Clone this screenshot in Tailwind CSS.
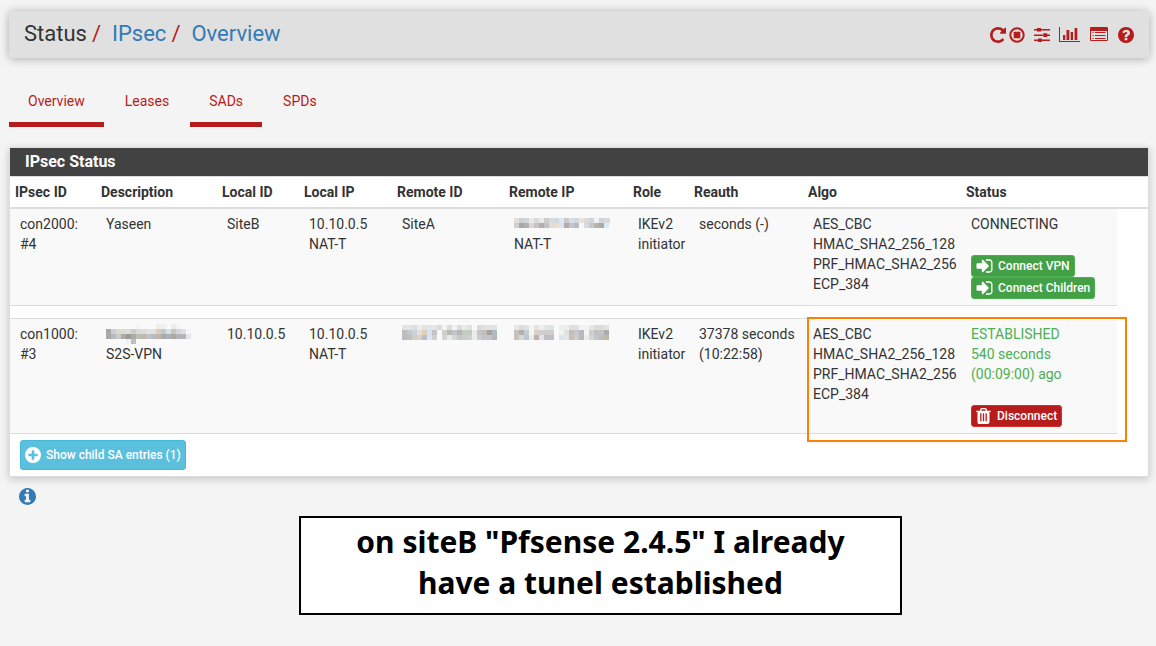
<!DOCTYPE html>
<html lang="en">
<head>
<meta charset="utf-8">
<meta name="viewport" content="width=device-width, initial-scale=1">
<title>Status / IPsec / Overview</title>
<script src="https://cdn.jsdelivr.net/npm/@tailwindcss/browser@4"></script>
</head>
<body class="min-h-screen bg-[#f4f4f4] font-['Roboto',sans-serif] text-sm text-[#333333]">
<svg class="hidden" aria-hidden="true">
  <symbol id="repeat" viewBox="128 128 1536 1536"><path d="M1664 256v448q0 26-19 45t-45 19h-448q-42 0-59-40-17-39 14-69l138-138q-148-137-349-137-104 0-198.5 40.5t-163.5 109.5-109.5 163.5-40.5 198.5 40.5 198.5 109.5 163.5 163.5 109.5 198.5 40.5q119 0 225-52t179-147q7-10 23-12 15 0 25 9l137 138q9 8 9.5 20.5t-7.5 22.5q-109 132-264 204.5t-327 72.5q-156 0-298-61t-245-164-164-245-61-298 61-298 164-245 245-164 298-61q147 0 284.5 55.5t244.5 156.5l130-129q29-31 70-14 39 17 39 59z"/></symbol>
  <symbol id="question" viewBox="128 128 1536 1536"><path d="M1024 1376v-192q0-14-9-23t-23-9h-192q-14 0-23 9t-9 23v192q0 14 9 23t23 9h192q14 0 23-9t9-23zm256-672q0-88-55.5-163t-138.5-116-170-41q-243 0-371 213-15 24 8 42l132 100q7 6 19 6 16 0 25-12 53-68 86-92 34-24 86-24 48 0 85.5 26t37.5 59q0 38-20 61t-68 45q-63 28-115.5 86.5t-52.5 125.5v36q0 14 9 23t23 9h192q14 0 23-9t9-23q0-19 21.5-49.5t54.5-49.5q32-18 49-28.5t46-35 44.5-48 28-60.5 12.5-81zm384 192q0 209-103 385.5t-279.5 279.5-385.5 103-385.5-103-279.5-279.5-103-385.5 103-385.5 279.5-279.5 385.5-103 385.5 103 279.5 279.5 103 385.5z"/></symbol>
  <symbol id="plus" viewBox="128 128 1536 1536"><path d="M1344 960v-128q0-26-19-45t-45-19h-256v-256q0-26-19-45t-45-19h-128q-26 0-45 19t-19 45v256h-256q-26 0-45 19t-19 45v128q0 26 19 45t45 19h256v256q0 26 19 45t45 19h128q26 0 45-19t19-45v-256h256q26 0 45-19t19-45zm320-64q0 209-103 385.5t-279.5 279.5-385.5 103-385.5-103-279.5-279.5-103-385.5 103-385.5 279.5-279.5 385.5-103 385.5 103 279.5 279.5 103 385.5z"/></symbol>
  <symbol id="info" viewBox="128 128 1536 1536"><path d="M1152 1376v-160q0-14-9-23t-23-9h-96v-512q0-14-9-23t-23-9h-320q-14 0-23 9t-9 23v160q0 14 9 23t23 9h96v320h-96q-14 0-23 9t-9 23v160q0 14 9 23t23 9h448q14 0 23-9t9-23zm-128-896v-160q0-14-9-23t-23-9h-192q-14 0-23 9t-9 23v160q0 14 9 23t23 9h192q14 0 23-9t9-23zm640 416q0 209-103 385.5t-279.5 279.5-385.5 103-385.5-103-279.5-279.5-103-385.5 103-385.5 279.5-279.5 385.5-103 385.5 103 279.5 279.5 103 385.5z"/></symbol>
  <symbol id="signin" viewBox="128 128 1536 1536"><path d="M1312 896q0 26-19 45l-544 544q-19 19-45 19t-45-19-19-45v-288h-448q-26 0-45-19t-19-45v-384q0-26 19-45t45-19h448v-288q0-26 19-45t45-19 45 19l544 544q19 19 19 45zm352-352v704q0 119-84.5 203.5t-203.5 84.5h-320q-13 0-22.5-9.5t-9.5-22.5q0-4-1-20t-.5-26.5 3-23.5 10-19.5 20.5-6.5h320q66 0 113-47t47-113v-704q0-66-47-113t-113-47h-312l-11.5-1-11.5-3-8-5.5-7-9-2-13.5q0-4-1-20t-.5-26.5 3-23.5 10-19.5 20.5-6.5h320q119 0 203.5 84.5t84.5 203.5z"/></symbol>
  <symbol id="trash" viewBox="192 128 1408 1536"><path d="M704 1376v-704q0-14-9-23t-23-9h-64q-14 0-23 9t-9 23v704q0 14 9 23t23 9h64q14 0 23-9t9-23zm256 0v-704q0-14-9-23t-23-9h-64q-14 0-23 9t-9 23v704q0 14 9 23t23 9h64q14 0 23-9t9-23zm256 0v-704q0-14-9-23t-23-9h-64q-14 0-23 9t-9 23v704q0 14 9 23t23 9h64q14 0 23-9t9-23zm-544-992h448l-48-117q-7-9-17-11h-317q-10 2-17 11zm928 32v64q0 14-9 23t-23 9h-96v948q0 83-47 143.5t-113 60.5h-832q-66 0-113-58.5t-47-141.5v-952h-96q-14 0-23-9t-9-23v-64q0-14 9-23t23-9h309l70-167q15-37 54-63t79-26h320q40 0 79 26t54 63l70 167h309q14 0 23 9t9 23z"/></symbol>
</svg>

<header class="mt-[11px] mr-[7px] ml-[9px] flex items-start justify-between rounded-sm bg-[#e0e0e0] px-[15px] pt-[9px] pb-[10px] shadow-[0_1px_10px_rgba(0,0,0,0.3)]">
  <nav aria-label="Breadcrumb">
    <ol class="flex text-[22px] leading-7">
      <li>Status</li>
      <li class="flex"><span class="pr-[11px] pl-[5px] text-[#b71c1c]">/</span><a href="#" class="text-[#337ab7]">IPsec</a></li>
      <li class="flex"><span class="pr-[11px] pl-[5px] text-[#b71c1c]">/</span><a href="#" class="text-[#337ab7]">Overview</a></li>
    </ol>
  </nav>
  <div class="flex items-center pt-[7px] text-[#b71c1c]">
    <a href="#" aria-label="Restart service" class="mr-[3px]"><svg class="size-4 fill-current"><use href="#repeat"/></svg></a>
    <a href="#" aria-label="Stop service" class="mr-[9px]"><svg class="size-4 fill-current" viewBox="0 0 16 16"><circle cx="8" cy="8" r="6.7" fill="none" stroke="currentColor" stroke-width="2"/><rect x="4.700" y="4.700" width="6.600" height="6.600" rx=".5"/></svg></a>
    <a href="#" aria-label="Settings" class="mr-[9px]"><svg class="size-4 fill-current" viewBox="0 0 16 16"><path d="M0 2h3v1.500H0zM7 2h9v1.500H7zM3 1h4v3.600H3zM0 7.500h9v1.500H0zM13 7.500h3v1.500h-3zM9.300 6.300h3.900v3.700H9.300zM0 12.500h4v1.500H0zM8 12.500h8v1.500H8zM4 11.400h3.900v3.700H4z"/></svg></a>
    <a href="#" aria-label="Graphs" class="mr-[10px]"><svg class="h-4 w-[21px] fill-current" viewBox="0 0 21 16"><path d="M0 0h1v14h20v1H0zM4 8h2.300v5H4zM7.500 3h2.800v10H7.500zM11.700 5H14v8h-2.300zM15.600 1h2.700v12h-2.700z"/></svg></a>
    <a href="#" aria-label="Logs" class="mr-[10px]"><svg class="h-4 w-[18px] fill-current" viewBox="0 0 18 16"><path fill-rule="evenodd" d="M1.300 0h15.400Q18 0 18 1.300v11.400Q18 14 16.700 14H1.300Q0 14 0 12.700V1.300Q0 0 1.300 0zM1 4v9h16V4z"/><path d="M2.500 5h1.200v1H2.500zM5 5h10.500v1H5zM2.500 8h1.200v1H2.500zM5 8h10.500v1H5zM2.500 11h1.200v1H2.500zM5 11h10.500v1H5z"/></svg></a>
    <a href="#" aria-label="Help"><svg class="size-4 fill-current"><use href="#question"/></svg></a>
  </div>
</header>

<nav aria-label="IPsec" class="mt-6 mr-[7px] ml-[9px] flex gap-[2px] text-[#b71c1c]">
  <a href="#" aria-current="page" class="border-b-[5px] border-[#b71c1c] px-[19px] pt-[9px] pb-[11px] leading-5">Overview</a>
  <a href="#" class="border-b-[5px] border-transparent px-[19px] pt-[9px] pb-[11px] leading-5">Leases</a>
  <a href="#" class="border-b-[5px] border-[#b71c1c] px-[19px] pt-[9px] pb-[11px] leading-5">SADs</a>
  <a href="#" class="border-b-[5px] border-transparent px-[19px] pt-[9px] pb-[11px] leading-5">SPDs</a>
</nav>

<main class="mt-5 mr-[7px] ml-[9px]">
  <section class="relative border border-[#dddddd] bg-white shadow-[0_2px_8px_rgba(0,0,0,0.2)]">
    <h2 class="border-b border-[#dddddd] bg-[#424242] px-[15px] py-[2px] text-base leading-6 font-bold text-white">IPsec Status</h2>
    <table class="w-full table-fixed border-collapse text-left leading-5">
      <colgroup>
        <col class="w-[86px]"><col class="w-[121px]"><col class="w-[82px]"><col class="w-[93px]"><col class="w-[112px]"><col class="w-[124px]"><col class="w-[61px]"><col class="w-[114px]"><col class="w-[158px]"><col class="w-[156px]"><col class="w-[31px]">
      </colgroup>
      <thead>
        <tr class="border-b-2 border-[#dddddd] whitespace-nowrap *:p-[5px] *:font-bold">
          <th>IPsec ID</th><th>Description</th><th>Local ID</th><th>Local IP</th><th>Remote ID</th><th>Remote IP</th><th>Role</th><th>Reauth</th><th>Algo</th><th>Status</th><td></td>
        </tr>
      </thead>
      <tbody>
        <tr class="h-[97px] align-top *:pt-[5px] *:pl-[10px] [&>td:not(:last-child)]:border-b [&>td:not(:last-child)]:border-[#dddddd] [&>td:not(:last-child)]:bg-[#f9f9f9]">
          <td>con2000:<br>#4</td><td>Yaseen</td><td>SiteB</td><td>10.10.0.5<br>NAT-T</td><td>SiteA</td>
          <td><svg class="block h-5 w-24" role="img" aria-label="Redacted address" data-top="4" data-rows="e2dedcd0cfcfd3d6d9ece7e8d9d9d9e8e8e8cccccad9d9e0d3d8dcdfe8f0c9c9c9d8dee6d6d9dce4e4e4dedad6cfd5dbf1f1f3d0d4d9d9d9d9d6d5cfc1c5cddfebf7|d0d0d0a9a9a9b4b0abdad7d5c5c4c2aeaeb0c3c2bcdfdcd8e9dcd0dae5eeb6aaa8c3c6cdb7bcc3f7f7f7d8dadec6c8cdb6b4a9aaa9b2dbe9f5"></svg>NAT-T</td>
          <td>IKEv2<br>initiator</td><td>seconds (-)</td><td>AES_CBC<br>HMAC_SHA2_256_128<br>PRF_HMAC_SHA2_256<br>ECP_384</td>
          <td>CONNECTING
            <div class="mt-[21px] flex flex-col items-start">
              <button type="button" class="flex h-[22px] items-center gap-[5px] rounded-[3px] border border-[#4caf50] bg-[#43a047] px-1 text-xs font-medium text-white"><svg class="h-4 w-[17px] fill-current"><use href="#signin"/></svg>Connect VPN</button>
              <button type="button" class="flex h-[22px] items-center gap-[5px] rounded-[3px] border border-[#4caf50] bg-[#43a047] px-1 text-xs font-medium text-white"><svg class="h-4 w-[17px] fill-current"><use href="#signin"/></svg>Connect Children</button>
            </div>
          </td>
          <td></td>
        </tr>
        <tr><td colspan="11" class="h-[13px]"></td></tr>
        <tr class="h-[115px] align-top *:pt-[5px] *:pl-[10px] [&>td:not(:last-child)]:border-y [&>td:not(:last-child)]:border-[#dddddd] [&>td:not(:last-child)]:bg-[#f9f9f9]">
          <td>con1000:<br>#3</td>
          <td><svg class="block h-5 w-24" role="img" aria-label="Redacted name" data-top="0" data-rows="f9f9f9f9f9f9f9f9f9f9f9f9f9f9f9f9f9f9f5f5f5f9f9f9f9f9f9f9f9f9f3ece5ebf2f9f9f9f9ecece9f5f5f5f9f9f9|a7a7a7cccfd2d9d9d5d9d9d6dcdcdccbccccd9d9d9dcdcdce3e3e3e0e3e6d9cfc1bdcbd4dcdfe1c8c4bcd6d6d6dfdfe3f5f5f5|a9a9a9b9bcbfcacac6ada9a59a9a9aaeaaa8bfbdb5bfb9a9c2c2c5b9bac7c0b7a8a5adb3acb2b8a9a9a3b5b5b8b5b5b8e4e4ea|f9f9f9f9f9f9f9f9f9f9f9f9f0f0f0bbbfc4"></svg>S2S-VPN</td>
          <td>10.10.0.5</td><td>10.10.0.5<br>NAT-T</td>
          <td><svg class="block h-5 w-24" role="img" aria-label="Redacted address" data-top="1" data-rows="e3e3e3e6e2dfdce0e4ecece8e3e3e3dfe5ece6e6e6dedbd8f3f3f3dcdcdcf3f3f3dbdcdeeaede6dbe4e1f9f9f9dbdbdbe7e1dce3e3e3dbe3e5|bfbebfc4c8cbcfd3d8e5dfd9e5cfb9cfe5f3c3c4c8f7f7f7cececeb9b9b9c3c6c8b6b6b6c4c9c2c0cbc6ebebebc5c5c8c4bdb8a2a2a2afb8be|bcbcbfbfbfc4d3cdc7ded2c5b7bec7dae7f2cfcfd3f9f9f9d4d4d4e8e8e8d2d7dbc7c7c7c9cdc8ccd2cdeaebedcccccec3c3c3c5c5c9b4b6bc"></svg></td>
          <td><svg class="block h-5 w-[98px]" role="img" aria-label="Redacted address" data-top="1" data-rows="e8e8e8dedcdadde3e6f4f4f4e3e3e3f2eee9e0e5e9e0e3e6f9f9f9eaede9edede9dedededfdfe2f4f4f4f3f3f3e6e8e0dbdbdbdcdcdde3e3df|c5c1bcb3afaac0ced2f4f4f4dad2c7cdced8cccdcfcdcdd0f9f9f9f1f4eddde2e6c6bdb5c7c8cbb6b6bef5f5f5cecfcdbdc0c4c6c6bcacabb4|c9c4bbd7d9d9bcc6ccebebebbbb3aae3e3e9bfbfc3c0c0c4f9f9f9dde2e7e3e6ebc7c2b8cfcccbb8b8bdebebebd5d5d5c5c6c8bdbdbebdb9ab"></svg></td>
          <td>IKEv2<br>initiator</td><td>37378 seconds<br>(10:22:58)</td><td>AES_CBC<br>HMAC_SHA2_256_128<br>PRF_HMAC_SHA2_256<br>ECP_384</td>
          <td><span class="text-[#4caf50]">ESTABLISHED<br>540 seconds<br>(00:09:00) ago</span>
            <button type="button" class="mt-[21px] flex h-[22px] items-center gap-[6px] rounded-[3px] border border-[#d32f2f] bg-[#b71c1c] px-1 text-xs font-medium text-white"><svg class="h-4 w-[15px] fill-current"><use href="#trash"/></svg>Disconnect</button>
          </td>
          <td></td>
        </tr>
      </tbody>
    </table>
    <div class="px-[10px] py-[6px]">
      <button type="button" class="flex h-[30px] items-center gap-[5px] rounded-[3px] border border-[#46b8da] bg-[#5bc0de] px-1 text-xs font-medium text-white"><svg class="size-4 fill-current"><use href="#plus"/></svg>Show child SA entries (1)</button>
    </div>
    <div class="pointer-events-none absolute right-[21px] bottom-[34px] h-[125px] w-[320px] border-2 border-[#ff8000]"></div>
  </section>
  <button type="button" aria-label="Information" class="mt-[11px] ml-[10px] block text-[#337ab7]"><svg class="size-[17px] fill-current"><use href="#info"/></svg></button>
</main>

<aside class="mt-[11px] ml-[299px] w-[603px] border-2 border-black bg-white pt-[3px] pb-[10px] text-center font-['Noto_Sans',sans-serif] text-[30px] leading-[41px] font-bold text-black">on siteB "Pfsense 2.4.5" I already<br>have a tunel established</aside>

<script>
  // Fill each redacted field with its mosaic of 5px colour cells.
  document.querySelectorAll('svg[data-rows]').forEach(function (svg) {
    svg.dataset.rows.split('|').forEach(function (row, r) {
      row.match(/.{6}/g).forEach(function (color, c) {
        var cell = document.createElementNS('http://www.w3.org/2000/svg', 'rect');
        cell.setAttribute('x', c * 5);
        cell.setAttribute('y', Number(svg.dataset.top) + r * 5);
        cell.setAttribute('width', 5);
        cell.setAttribute('height', 5);
        cell.setAttribute('fill', '#' + color);
        svg.appendChild(cell);
      });
    });
  });
</script>
</body>
</html>
